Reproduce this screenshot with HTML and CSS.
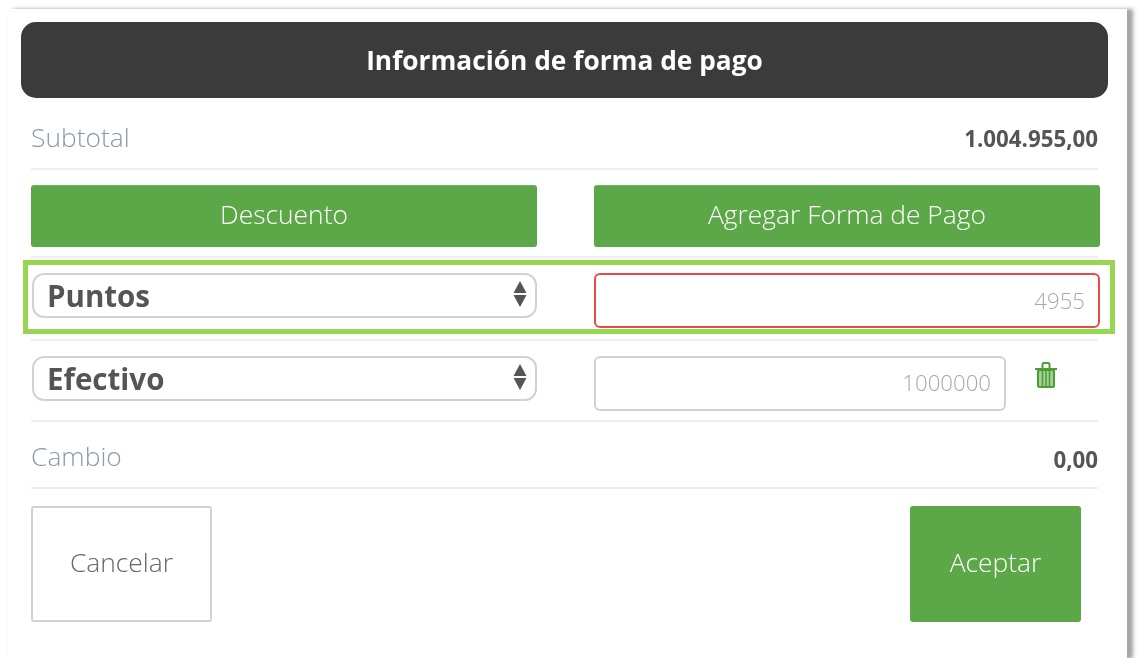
FILE: index.html
```html
<!DOCTYPE html>
<html lang="es">
<head>
    <meta charset="UTF-8">
    <meta name="viewport" content="width=device-width, initial-scale=1.0">
    <title>Información de forma de pago</title>
    <link rel="stylesheet" href="styles.css">
</head>
<body>
    <div class="panel">
        <h2 class="panel-title">Información de forma de pago</h2>
        <div class="content">
            <div class="total-row subtotal">
                <span class="total-label">Subtotal</span>
                <strong class="total-value">1.004.955,00</strong>
            </div>
            <div class="divider"></div>

            <div class="two-cols actions">
                <button class="button">Descuento</button>
                <button class="button">Agregar Forma de Pago</button>
            </div>
            <div class="divider"></div>

            <div class="highlight">
                <div class="two-cols">
                    <div class="select-box">
                        <select class="select"><option>Puntos</option></select>
                        <svg class="select-arrows" width="14" height="26" viewBox="0 0 14 26"><path d="M7 0l6.500 12H.5zM.5 14h13L7 26z"/></svg>
                    </div>
                    <input class="amount amount-error" type="text" value="4955">
                </div>
            </div>
            <div class="divider"></div>

            <div class="two-cols payment">
                <div class="select-box">
                    <select class="select"><option>Efectivo</option></select>
                    <svg class="select-arrows" width="14" height="26" viewBox="0 0 14 26"><path d="M7 0l6.500 12H.5zM.5 14h13L7 26z"/></svg>
                </div>
                <div class="amount-line">
                    <input class="amount" type="text" value="1000000">
                    <svg class="trash" width="22" height="26" viewBox="0 0 22 26">
                        <path class="trash-lid" d="M0 7h22M7.500 7V2.500Q7.500 1 9 1h4q1.500 0 1.500 1.500V7"/>
                        <rect class="trash-body" x="3" y="8" width="16" height="17" rx="1.500"/>
                        <path class="trash-lines" d="M7.500 9v15M11 9v15M14.500 9v15"/>
                    </svg>
                </div>
            </div>
            <div class="divider"></div>

            <div class="total-row change">
                <span class="total-label">Cambio</span>
                <strong class="total-value">0,00</strong>
            </div>
            <div class="divider"></div>

            <div class="footer">
                <button class="button-big button-white">Cancelar</button>
                <button class="button-big button-green">Aceptar</button>
            </div>
        </div>
    </div>
</body>
</html>
```

FILE: styles.css
```css
body {
    margin: 0;
    background-color: white;
    font-family: "Open Sans", sans-serif;
}

.panel {
    box-sizing: border-box;
    width: 1119px;
    height: 649px;
    margin: 9px 0 0 8px;
    padding: 13px 19px 0 13px;
    background-color: white;
    box-shadow: 6px 0 4px #a6a6a6, 3px 2px 4px #b8b8b8;
    filter: blur(0.6px);
}

.panel-title {
    height: 76px;
    margin: 0;
    background-color: #3b3b3b;
    border-radius: 15px;
    color: white;
    font-size: 26.300px;
    font-weight: 700;
    line-height: 76px;
    text-align: center;
}

.content {
    margin: 0 8px 0 10px;
}

.divider {
    height: 2px;
    margin-right: 2px;
    background-color: #eeeeee;
}

.two-cols {
    display: grid;
    grid-template-columns: 506px 506px;
    column-gap: 57px;
}

.total-row {
    display: flex;
    box-sizing: border-box;
    justify-content: space-between;
    align-items: center;
    margin-right: 2px;
}

.subtotal {
    height: 70px;
    padding-top: 7px;
}

.change {
    height: 65px;
    padding-top: 2px;
}

.total-label {
    color: #8a9aab;
    font-size: 26.400px;
    font-weight: 300;
}

.total-value {
    margin-top: 7px;
    color: #555555;
    font-size: 22.300px;
    font-weight: 700;
}

.subtotal .total-value {
    margin-top: 4px;
}

.actions {
    padding: 15px 0 9px;
}

.button {
    height: 62px;
    padding: 0 0 5px;
    background-color: #5ca747;
    border: none;
    border-top: 1px solid #72b560;
    border-radius: 3px;
    color: white;
    font-family: inherit;
    font-size: 26.400px;
    font-weight: 300;
}

.highlight {
    box-sizing: border-box;
    height: 74px;
    margin: 2px -15px 5px -8px;
    padding: 8px 10px 0 3px;
    border: 5px solid #97d651;
}

.select-box {
    position: relative;
    height: 45px;
    margin-left: 1px;
}

.select {
    display: block;
    box-sizing: border-box;
    width: 100%;
    height: 45px;
    padding: 0 0 2px 13px;
    appearance: none;
    background-color: white;
    border: 2px solid #d2d2d2;
    border-radius: 12px;
    color: #555555;
    font-family: inherit;
    font-size: 29.500px;
    font-weight: 700;
}

.select-arrows {
    position: absolute;
    top: 8px;
    right: 10px;
    fill: #555555;
}

.amount {
    display: block;
    box-sizing: border-box;
    width: 100%;
    height: 55px;
    padding: 0 13px 2px 0;
    background-color: white;
    border: 2px solid #d2d2d2;
    border-radius: 6px;
    color: #a8a8a8;
    font-family: inherit;
    font-size: 22.200px;
    font-weight: 300;
    text-align: right;
}

.amount-error {
    padding-bottom: 0;
    border-color: #e84a4a;
}

.payment {
    padding: 15px 0 9px;
}

.amount-line {
    display: flex;
    align-items: flex-start;
    gap: 29px;
}

.amount-line .amount {
    width: 412px;
}

.trash {
    flex: none;
    margin-top: 6px;
}

.trash-lid {
    fill: none;
    stroke: #4d9d35;
    stroke-width: 2;
}

.trash-body {
    fill: #a5cf98;
    stroke: #4d9d35;
    stroke-width: 2;
}

.trash-lines {
    stroke: #4d9d35;
    stroke-width: 1.500;
}

.footer {
    display: flex;
    justify-content: space-between;
    padding: 17px 19px 0 0;
}

.button-big {
    width: 181px;
    height: 116px;
    padding: 0 0 5px;
    border-radius: 3px;
    font-family: inherit;
    font-size: 26.400px;
    font-weight: 300;
}

.button-white {
    background-color: white;
    border: 2px solid #d2d2d2;
    color: #666666;
}

.button-green {
    width: 171px;
    background-color: #5ca747;
    border: none;
    color: white;
}
```
